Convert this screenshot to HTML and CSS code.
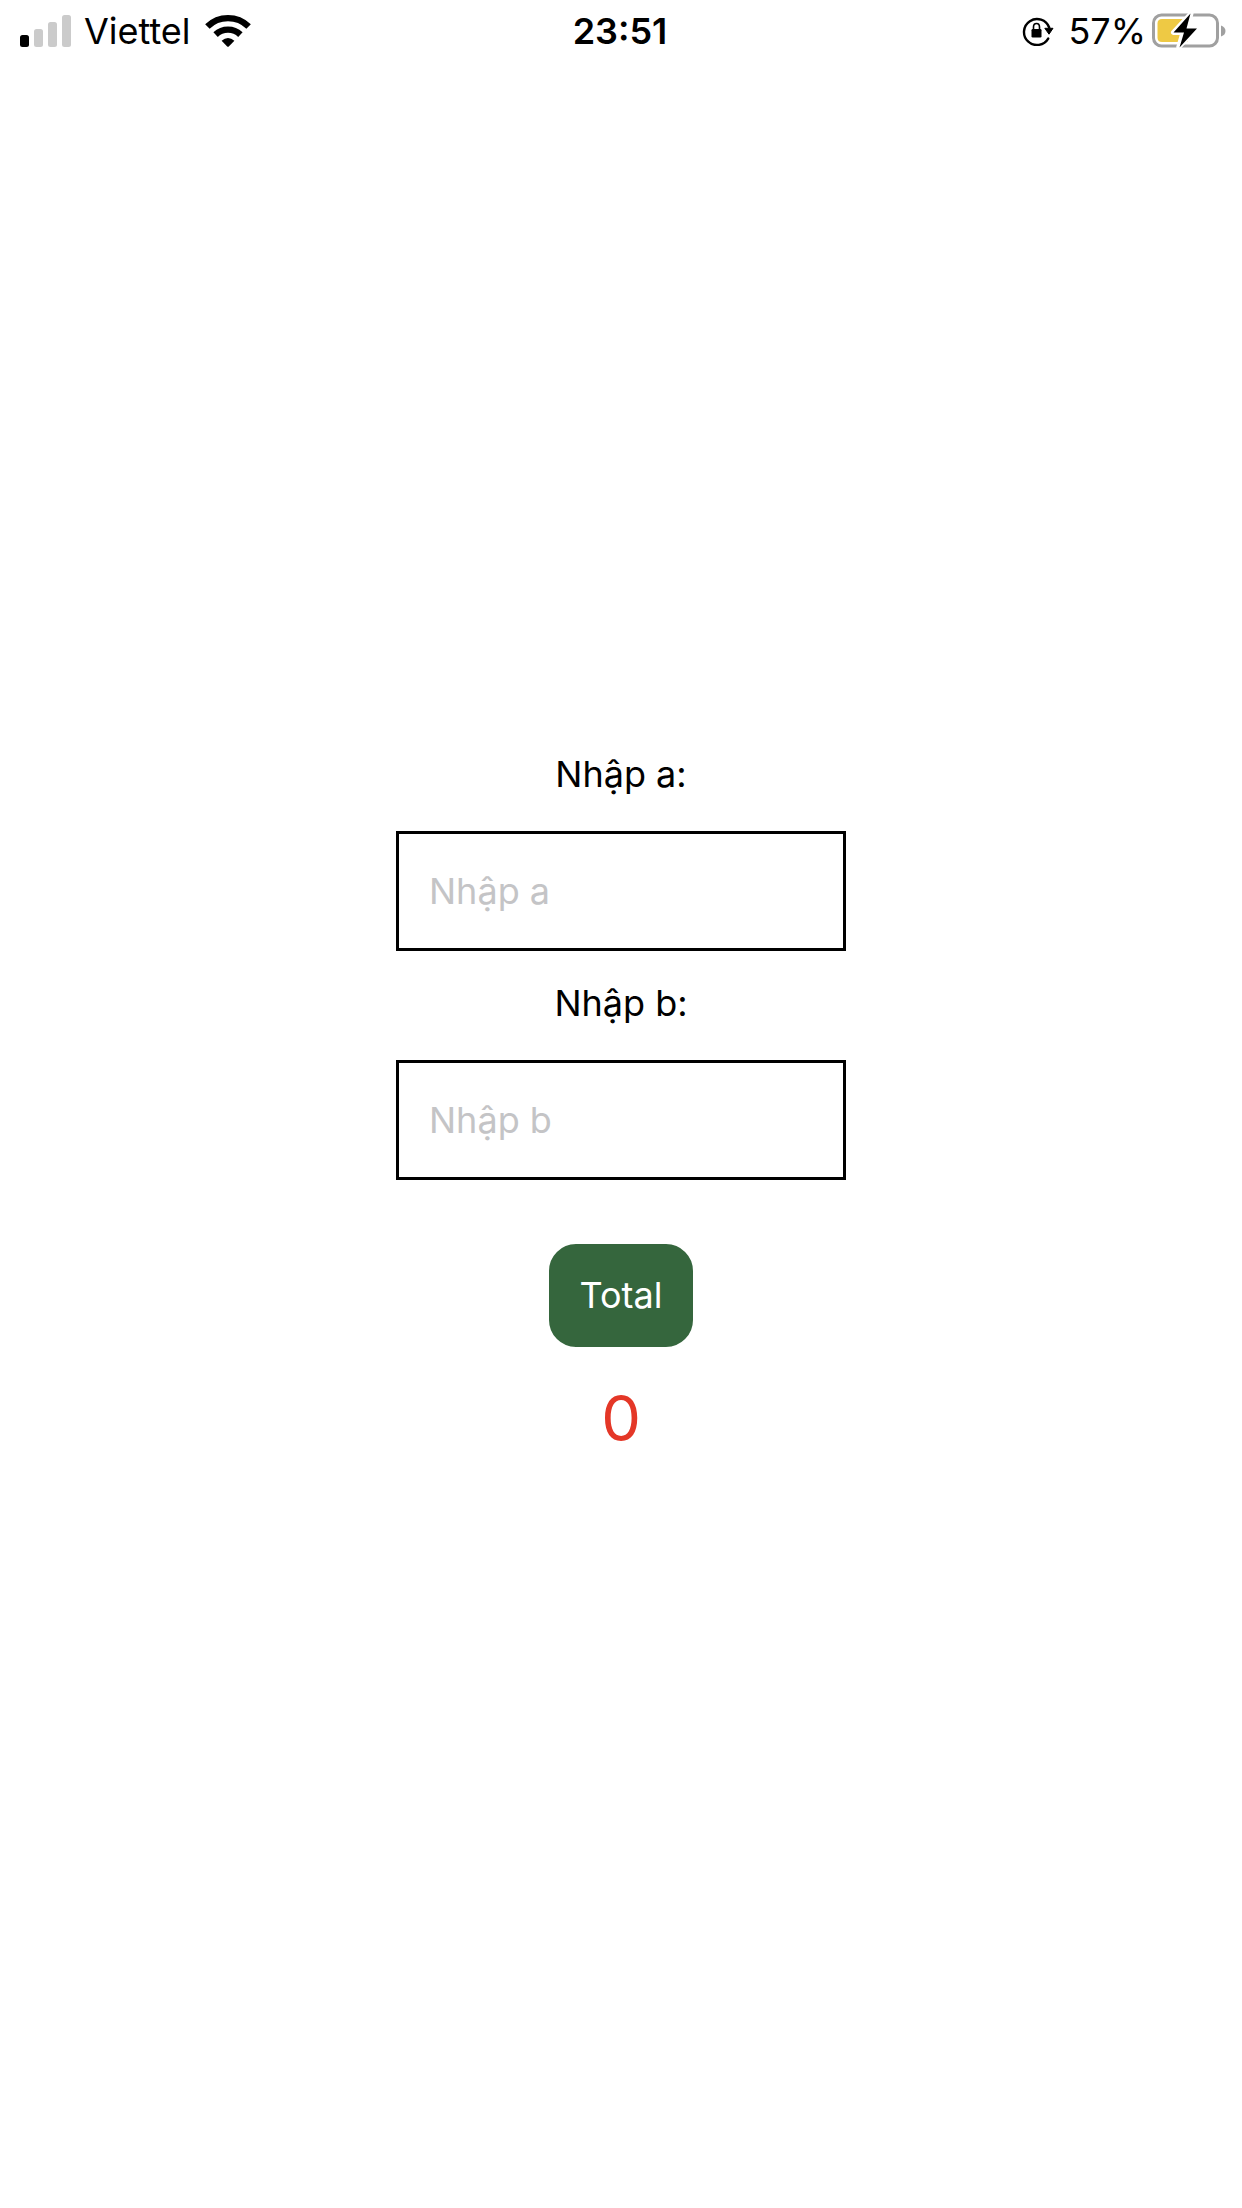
FILE: index.html
```html
<!DOCTYPE html>
<html lang="vi">
<head>
<meta charset="utf-8">
<meta name="viewport" content="width=device-width, initial-scale=1">
<title>Total</title>
<link rel="stylesheet" href="styles.css">
</head>
<body>
<header class="status">
  <div class="status-side status-start">
    <svg class="signal" width="52" height="32" viewBox="0 0 52 32" aria-hidden="true">
      <rect x="0" y="20" width="9" height="12" rx="2.5"/>
      <g fill="#cbcbcb">
        <rect x="14" y="14" width="9" height="18" rx="2.5"/>
        <rect x="28" y="7" width="9" height="25" rx="2.5"/>
        <rect x="42" y="0" width="9" height="32" rx="2.5"/>
      </g>
    </svg>
    <span class="carrier">Viettel</span>
    <svg class="wifi" width="46" height="34" viewBox="0 0 46 34" aria-hidden="true">
      <g fill="none" stroke="#000" stroke-width="6.4">
        <path d="M2.4 12.5A29.5 29.5 0 0 1 43.6 12.5"/>
        <path d="M10.6 20.6A18 18 0 0 1 35.4 20.6"/>
      </g>
      <path d="M16.6 26.7Q23 21.5 29.4 26.7L23.8 32.4Q23 33.2 22.2 32.4Z"/>
    </svg>
  </div>
  <time class="clock">23:51</time>
  <div class="status-side status-end">
    <svg class="lock" width="32" height="30" viewBox="0 0 32 30" aria-hidden="true">
      <path d="M26.2 22.6A13 13 0 1 1 27.2 11.5" fill="none" stroke="#000" stroke-width="2.4" stroke-linecap="round"/>
      <path d="M22.8 12.3H31L27 18.2Z" stroke="#000" stroke-linejoin="round"/>
      <rect x="9.500" y="13" width="10" height="8.500" rx="1.2"/>
      <path d="M11.500 13.5V11a3 3.5 0 0 1 6 0V13.5" fill="none" stroke="#000" stroke-width="1.6"/>
    </svg>
    <span class="percent">57%</span>
    <svg class="battery" width="74" height="36" viewBox="0 0 74 36" aria-hidden="true">
      <rect x="1.5" y="2" width="64" height="31" rx="8" fill="none" stroke="#a0a0a0" stroke-width="3"/>
      <path d="M69 12.5Q73.5 14 73.5 18T69 23.5Z" fill="#a0a0a0"/>
      <path d="M10 6H36V29H10Q5.500 29 5.500 24.500V10.500Q5.500 6 10 6Z" fill="#eec944"/>
      <path d="M39 .5L21.500 19.500H31L26.800 34L45 15.500H35.500Z" stroke="#fff" stroke-width="5" stroke-linejoin="round"/>
      <path d="M38.500 .5L21.500 19.500H32L27.500 34.500L45 15.500H34.500Z"/>
    </svg>
  </div>
</header>
<main class="content">
  <form class="sum-form">
    <label class="label" for="a">Nhập a:</label>
    <input class="field" id="a" type="text" inputmode="numeric" placeholder="Nhập a">
    <label class="label" for="b">Nhập b:</label>
    <input class="field" id="b" type="text" inputmode="numeric" placeholder="Nhập b">
    <button class="submit" type="button">Total</button>
    <output class="result" for="a b">0</output>
  </form>
</main>
</body>
</html>
```
FILE: styles.css
```css
* {
  box-sizing: border-box;
}

body {
  display: flex;
  flex-direction: column;
  min-height: 100vh;
  margin: 0;
  background: #fff;
  color: #000;
  font-family: Inter, "Liberation Sans", sans-serif;
  font-size: 36px;
  line-height: 43px;
}

.status {
  display: grid;
  grid-template-columns: 1fr auto 1fr;
  align-items: center;
  height: 62px;
  padding: 0 16px 0 14px;
}

.status-side {
  display: flex;
  align-items: center;
}

.status-start {
  padding-left: 6px;
}

.status-end {
  justify-content: flex-end;
}

.carrier {
  margin: 0 14px 0 12px;
}

.clock {
  font-weight: 600;
}

.percent {
  margin: 0 6px 0 14px;
}

.content {
  display: flex;
  flex: 1;
  flex-direction: column;
  align-items: center;
  justify-content: center;
  padding-bottom: 62px;
}

.sum-form {
  display: flex;
  flex-direction: column;
  align-items: center;
}

.label {
  margin-bottom: 34px;
  line-height: 45px;
}

.field {
  width: 450px;
  max-width: 100%;
  height: 120px;
  margin: 0 0 30px;
  padding: 0 30px;
  border: 3px solid #000;
  border-radius: 0;
  background: transparent;
  color: inherit;
  font: inherit;
}

.field::placeholder {
  color: #c4c4c6;
  opacity: 1;
}

.submit {
  margin: 31px 0 30px;
  padding: 30px 31px;
  border: 3px solid #fff;
  border-radius: 30px;
  background: #35663d;
  color: #fff;
  font: inherit;
}

.result {
  color: #e43727;
  font-size: 63px;
  line-height: 76px;
}
```
